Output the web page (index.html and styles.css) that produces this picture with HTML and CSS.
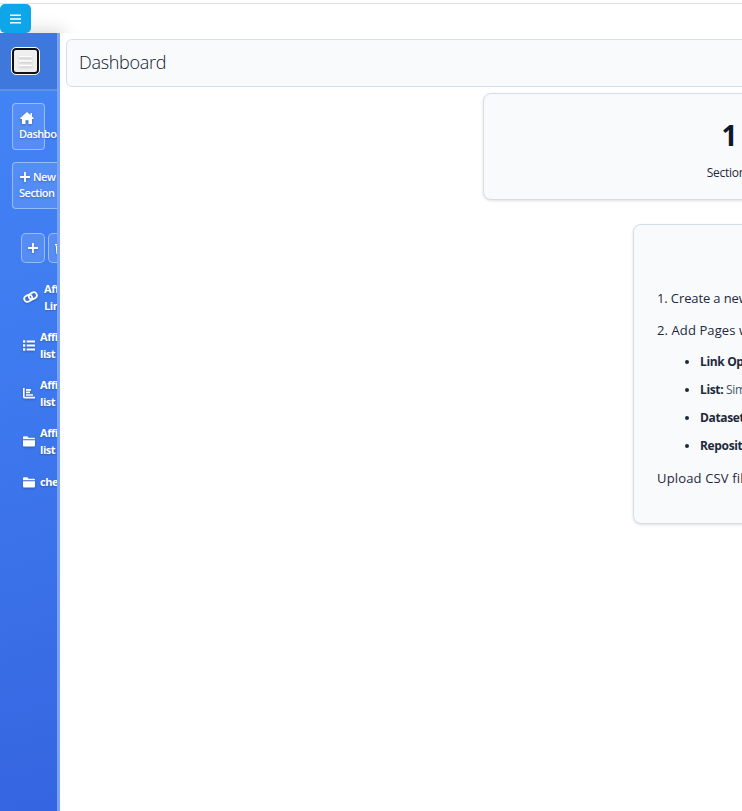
FILE: index.html
```html
<!DOCTYPE html>
<html lang="en">
<head>
<meta charset="utf-8">
<title>Dashboard</title>
<link rel="stylesheet" href="styles.css">
</head>
<body>
<header class="topbar">
  <button class="menu-button" aria-label="Menu"><svg width="11" height="10" viewBox="0 0 11 10"><path d="M0 1.3h11M0 5h11M0 8.7h11" stroke="#fff" stroke-width="1.6"/></svg></button>
</header>
<div class="shell">
  <aside class="sidebar">
    <div class="sidebar-head">
      <button class="toggle" aria-label="Toggle sidebar"><svg width="13" height="12" viewBox="0 0 13 12"><path d="M0 1.5h13M0 6h13M0 10.5h13" stroke="#fff" stroke-width="1.7"/></svg></button>
    </div>
    <nav class="actions">
      <a class="action home"><svg width="14" height="12" viewBox="0 0 14 12"><path fill="#fff" d="M7 0 0 6.2l.8.8H2v5h3.5V8.2h3V12H12V7h1.2l.8-.8-2-1.8V1h-1.5v2.1z"/></svg><span>Dashboard</span></a>
      <a class="action create"><span class="line"><svg width="10" height="10" viewBox="0 0 10 10"><path d="M5 .5v9M.5 5h9" stroke="#fff" stroke-width="1.8" stroke-linecap="round"/></svg>New</span><span>Section</span></a>
    </nav>
    <div class="tools">
      <button class="tool" aria-label="Add"><svg width="10" height="10" viewBox="0 0 10 10"><path d="M5 .5v9M.5 5h9" stroke="#fff" stroke-width="1.8" stroke-linecap="round"/></svg></button>
      <button class="tool" aria-label="Delete"><svg width="10" height="11" viewBox="0 0 10 11"><path fill="#fff" d="M0 1h3l1-1h2l1 1h3v1.4H0zM.8 3h8.4l-.6 8H1.4z"/></svg></button>
    </div>
    <ul class="pages">
      <li class="page link"><svg width="15" height="12" viewBox="0 0 15 12"><g fill="none" stroke="#fff" stroke-width="1.8" transform="rotate(-28 7.5 6)"><rect x=".8" y="3" width="8.2" height="6.2" rx="3.1"/><rect x="6" y="3" width="8.2" height="6.2" rx="3.1"/></g></svg><span>Affiliate<br>Links</span></li>
      <li class="page"><svg width="12" height="11" viewBox="0 0 12 11"><path d="M0 1.5h2.3M0 5.5h2.3M0 9.5h2.3" stroke="#fff" stroke-width="2.4"/><path d="M3.7 1.5H12M3.7 5.5H12M3.7 9.5H12" stroke="#fff" stroke-width="1.8"/></svg><span>Affiliate<br>list</span></li>
      <li class="page"><svg width="12" height="11" viewBox="0 0 12 11"><path d="M.8 0v8.7q0 1 1 1H12M3 1.8h5M3 4.4h4M3 7h7" fill="none" stroke="#fff" stroke-width="1.7"/></svg><span>Affiliate<br>list</span></li>
      <li class="page"><svg width="12" height="11" viewBox="0 0 12 11"><path fill="#fff" d="M0 3.3V1.2Q0 .3 1 .3h3.2l1.5 1.4H11q1 0 1 1v.6zM0 4.2h12v5.3q0 1-1 1H1q-1 0-1-1z"/></svg><span>Affiliate<br>list</span></li>
      <li class="page single"><svg width="12" height="11" viewBox="0 0 12 11"><path fill="#fff" d="M0 3.3V1.2Q0 .3 1 .3h3.2l1.5 1.4H11q1 0 1 1v.6zM0 4.2h12v5.3q0 1-1 1H1q-1 0-1-1z"/></svg><span>check</span></li>
    </ul>
  </aside>
  <main class="main">
    <div class="title-bar"><h1>Dashboard</h1></div>
    <section class="stat"><strong>1</strong><span>Sections</span></section>
    <section class="guide">
      <p class="first">1. Create a new</p>
      <p class="second">2. Add Pages with</p>
      <ul>
        <li><b>Link Opener</b></li>
        <li><b>List:</b> <span class="note">Simple</span></li>
        <li><b>Dataset:</b></li>
        <li><b>Repository:</b></li>
      </ul>
      <p class="upload">Upload CSV files</p>
    </section>
  </main>
</div>
</body>
</html>
```
FILE: styles.css
```css
* { box-sizing: border-box; }
body {
  margin: 0;
  width: 742px;
  height: 811px;
  overflow: hidden;
  background: #fff;
  color: #1e293b;
  font-family: "Open Sans", "Noto Sans", sans-serif;
}
svg { display: block; flex: none; }
button { padding: 0; margin: 0; }
.topbar { height: 33px; padding-top: 3px; }
.topbar::before { content: ""; display: block; height: 1px; background: #dee2e6; }
.menu-button {
  display: flex;
  align-items: center;
  justify-content: center;
  width: 31px;
  height: 29px;
  border: 0;
  border-radius: 5px;
  background: #0ea5e9;
  position: relative;
  z-index: 2;
}
.shell { display: flex; height: 778px; }
.sidebar {
  flex: none;
  width: 60px;
  overflow: hidden;
  border-right: 3px solid #7ba3f5;
  background: linear-gradient(165deg, #4285f7 0%, #3f7bf0 40%, #3565e0 100%);
  box-shadow: 4px 0 20px rgba(0, 0, 0, .2);
  color: #fff;
  font-size: 11px;
  white-space: nowrap;
  text-shadow: 0 1px 2px rgba(0, 0, 0, .25);
}
.sidebar svg { filter: drop-shadow(0 1px 1px rgba(0, 0, 0, .25)); }
.sidebar-head {
  height: 58px;
  padding: 15px 0 0 12px;
  border-bottom: 2px solid #6091e2;
  background: #3e78dc;
}
.toggle {
  display: flex;
  align-items: center;
  justify-content: center;
  width: 27px;
  height: 26px;
  border: 2px solid #101010;
  border-radius: 4px;
  background: #efefef;
  outline: 1px solid #fff;
}
.actions { display: flex; flex-direction: column; gap: 12px; padding: 12px 0 0 12px; }
.action {
  height: 47px;
  padding: 6px;
  border: 1px solid rgba(255, 255, 255, .4);
  border-radius: 4px;
  background: rgba(255, 255, 255, .1);
  font-weight: 600;
  line-height: 16px;
  letter-spacing: -.5px;
}
.action > span { display: block; }
.home { width: 33px; padding-top: 8px; }
.home svg { margin: 0 0 2px 1px; }
.create { width: 60px; }
.line svg { display: inline-block; margin: 0 3px 0 1px; vertical-align: -1px; }
.tools { display: flex; gap: 3px; padding: 24px 0 0 21px; }
.tool {
  display: flex;
  flex: none;
  align-items: center;
  justify-content: center;
  width: 24px;
  height: 30px;
  border: 1px solid rgba(255, 255, 255, .4);
  border-radius: 5px;
  background: rgba(255, 255, 255, .12);
}
.pages { margin: 10px 0 0; padding: 0 0 0 23px; list-style: none; }
.page {
  display: flex;
  align-items: center;
  gap: 5px;
  height: 48px;
  font-weight: 700;
  line-height: 17px;
  letter-spacing: -.45px;
}
.page span { padding-bottom: 1px; }
.link { gap: 6px; }
.single { height: 32px; margin-top: 1px; }
.main {
  flex: none;
  width: 682px;
  padding: 6px 0 0 6px;
  background: #fff;
  overflow: hidden;
  white-space: nowrap;
  position: relative;
}
.title-bar {
  width: 700px;
  height: 48px;
  padding: 0 12px;
  border: 1px solid #d5dfea;
  border-radius: 6px;
  background: #f8fafc;
}
h1 {
  margin: 0;
  color: #0f172a;
  font-size: 18px;
  font-weight: 300;
  line-height: 45px;
  letter-spacing: -.3px;
}
.stat, .guide {
  border: 1px solid #d4deeb;
  border-radius: 8px;
  background: #f8fafc;
  box-shadow: 0 1px 3px rgba(0, 0, 0, .12);
}
.stat {
  display: flex;
  flex-direction: column;
  align-items: center;
  width: 492px;
  height: 107px;
  margin: 6px 0 0 417px;
  padding-top: 24px;
}
.stat strong { padding-left: 1px; color: #0f172a; font-size: 28px; line-height: 35px; }
.stat span { margin-top: 10px; font-size: 12px; line-height: 20px; letter-spacing: -.25px; }
.guide {
  width: 400px;
  height: 300px;
  margin: 24px 0 0 567px;
  padding: 63px 23px 0;
  font-size: 13px;
}
.guide p { margin: 0; line-height: 20px; letter-spacing: -.12px; }
.guide .second { margin-top: 12px; letter-spacing: .1px; }
.guide ul {
  margin: 8px 0 0;
  padding-left: 43px;
  font-size: 12px;
  line-height: 28px;
  letter-spacing: -.35px;
}
.note { color: #475569; }
.guide .upload { margin-top: 8px; letter-spacing: .15px; }
```
